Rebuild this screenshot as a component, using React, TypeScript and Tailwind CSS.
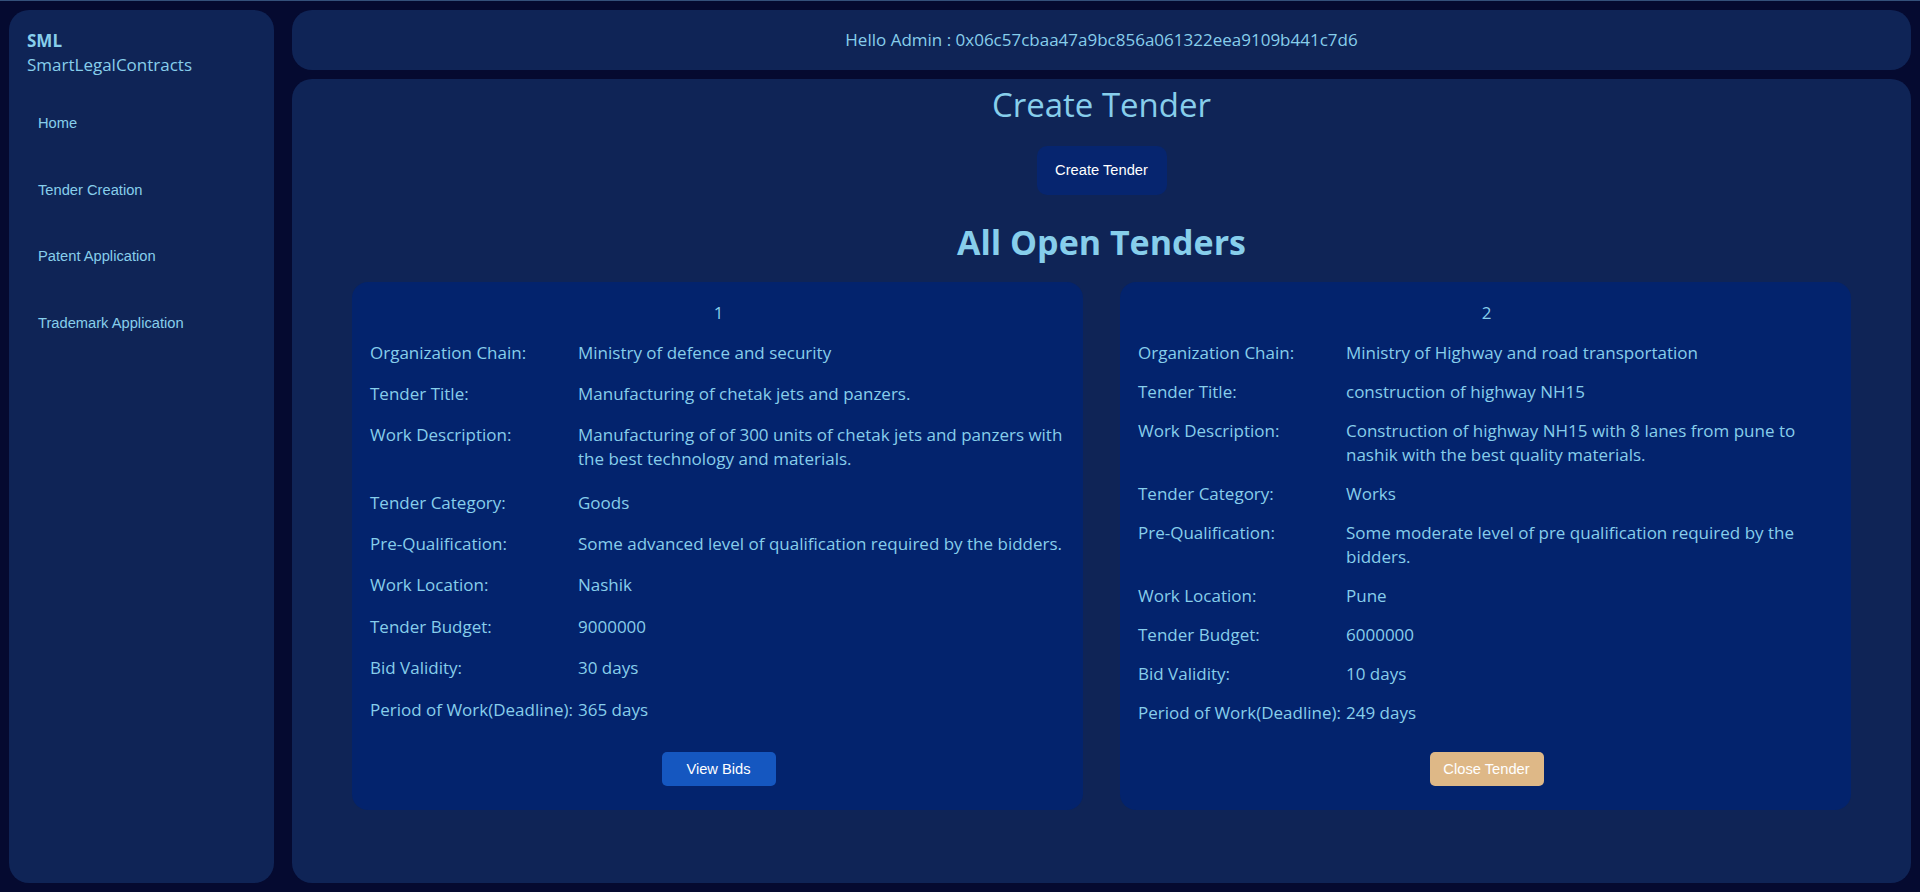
import React from "react";

type Row = { label: string; value: string };

const tenders: { id: number; rows: Row[]; action: "view" | "close" }[] = [
  {
    id: 1,
    action: "view",
    rows: [
      { label: "Organization Chain:", value: "Ministry of defence and security" },
      { label: "Tender Title:", value: "Manufacturing of chetak jets and panzers." },
      {
        label: "Work Description:",
        value:
          "Manufacturing of of 300 units of chetak jets and panzers with the best technology and materials.",
      },
      { label: "Tender Category:", value: "Goods" },
      { label: "Pre-Qualification:", value: "Some advanced level of qualification required by the bidders." },
      { label: "Work Location:", value: "Nashik" },
      { label: "Tender Budget:", value: "9000000" },
      { label: "Bid Validity:", value: "30 days" },
      { label: "Period of Work(Deadline):", value: "365 days" },
    ],
  },
  {
    id: 2,
    action: "close",
    rows: [
      { label: "Organization Chain:", value: "Ministry of Highway and road transportation" },
      { label: "Tender Title:", value: "construction of highway NH15" },
      {
        label: "Work Description:",
        value: "Construction of highway NH15 with 8 lanes from pune to nashik with the best quality materials.",
      },
      { label: "Tender Category:", value: "Works" },
      {
        label: "Pre-Qualification:",
        value: "Some moderate level of pre qualification required by the bidders.",
      },
      { label: "Work Location:", value: "Pune" },
      { label: "Tender Budget:", value: "6000000" },
      { label: "Bid Validity:", value: "10 days" },
      { label: "Period of Work(Deadline):", value: "249 days" },
    ],
  },
];

const navItems = ["Home", "Tender Creation", "Patent Application", "Trademark Application"];

function TenderCard({ t }: { t: (typeof tenders)[number] }) {
  return (
    <div className="flex flex-col rounded-[16px] bg-[#03236d] pt-[19px] pb-[24px] pl-[8px] pr-[6px]">
      <div className="text-center text-[17px] leading-6 text-[#87ceeb]">{t.id}</div>
      <div className="mt-[8px] flex flex-1 flex-col">
        <table className="h-full w-full border-collapse text-left text-[17px] leading-6 text-[#87ceeb]">
          <tbody>
            {t.rows.map((r) => (
              <tr key={r.label}>
                <td className="whitespace-nowrap py-[7.5px] pl-[10px] pr-[5px] align-top">{r.label}</td>
                <td className="py-[7.5px] pr-[3px] align-top">{r.value}</td>
              </tr>
            ))}
          </tbody>
        </table>
      </div>
      <div className="mt-[20px] flex justify-center">
        {t.action === "view" ? (
          <button className="h-[34px] w-[114px] rounded-[5px] bg-[#1557c0] font-['Liberation_Sans',Arial,sans-serif] text-[14.7px] text-white">
            View Bids
          </button>
        ) : (
          <button className="h-[34px] w-[114px] rounded-[5px] bg-[#deb887] font-['Liberation_Sans',Arial,sans-serif] text-[14.7px] text-white">
            Close Tender
          </button>
        )}
      </div>
    </div>
  );
}

export default function App() {
  return (
    <div className="flex h-screen w-full gap-[18px] border-t border-[#34507a] bg-[#050a30] pt-[9px] pr-[9px] pb-[9px] pl-[9px] font-['Open_Sans','Noto_Sans',sans-serif]">
      <aside className="flex w-[265px] shrink-0 flex-col rounded-[20px] bg-[#0f2456] pl-[18px] pt-[19px]">
        <div className="text-[17px] font-bold leading-6 text-[#87ceeb]">SML</div>
        <div className="text-[17px] leading-6 text-[#87ceeb]">SmartLegalContracts</div>
        <nav className="mt-[12.5px] flex flex-col">
          {navItems.map((n) => (
            <a
              key={n}
              href="#"
              className="flex h-[66.7px] items-center pl-[11px] font-['Liberation_Sans',Arial,sans-serif] text-[14.7px] text-[#87ceeb]"
            >
              {n}
            </a>
          ))}
        </nav>
      </aside>
      <div className="flex min-w-0 flex-1 flex-col gap-[9px]">
        <header className="flex h-[60px] shrink-0 items-center justify-center rounded-[20px] bg-[#0f2456] text-[17px] text-[#87ceeb]">
          Hello Admin : 0x06c57cbaa47a9bc856a061322eea9109b441c7d6
        </header>
        <main className="flex flex-1 flex-col items-center rounded-[20px] bg-[#0f2456] pt-[4px]">
          <h1 className="text-[33px] leading-[44px] text-[#87ceeb]">Create Tender</h1>
          <button className="mt-[19px] h-[49px] w-[130px] rounded-[10px] bg-[#06256f] font-['Liberation_Sans',Arial,sans-serif] text-[14.7px] text-white">
            Create Tender
          </button>
          <h2 className="mt-[25px] text-[34px] font-bold leading-[44px] text-[#87ceeb]">All Open Tenders</h2>
          <div className="mt-[18px] grid w-full grid-cols-2 gap-[37px] px-[60px]">
            {tenders.map((t) => (
              <TenderCard key={t.id} t={t} />
            ))}
          </div>
        </main>
      </div>
    </div>
  );
}
